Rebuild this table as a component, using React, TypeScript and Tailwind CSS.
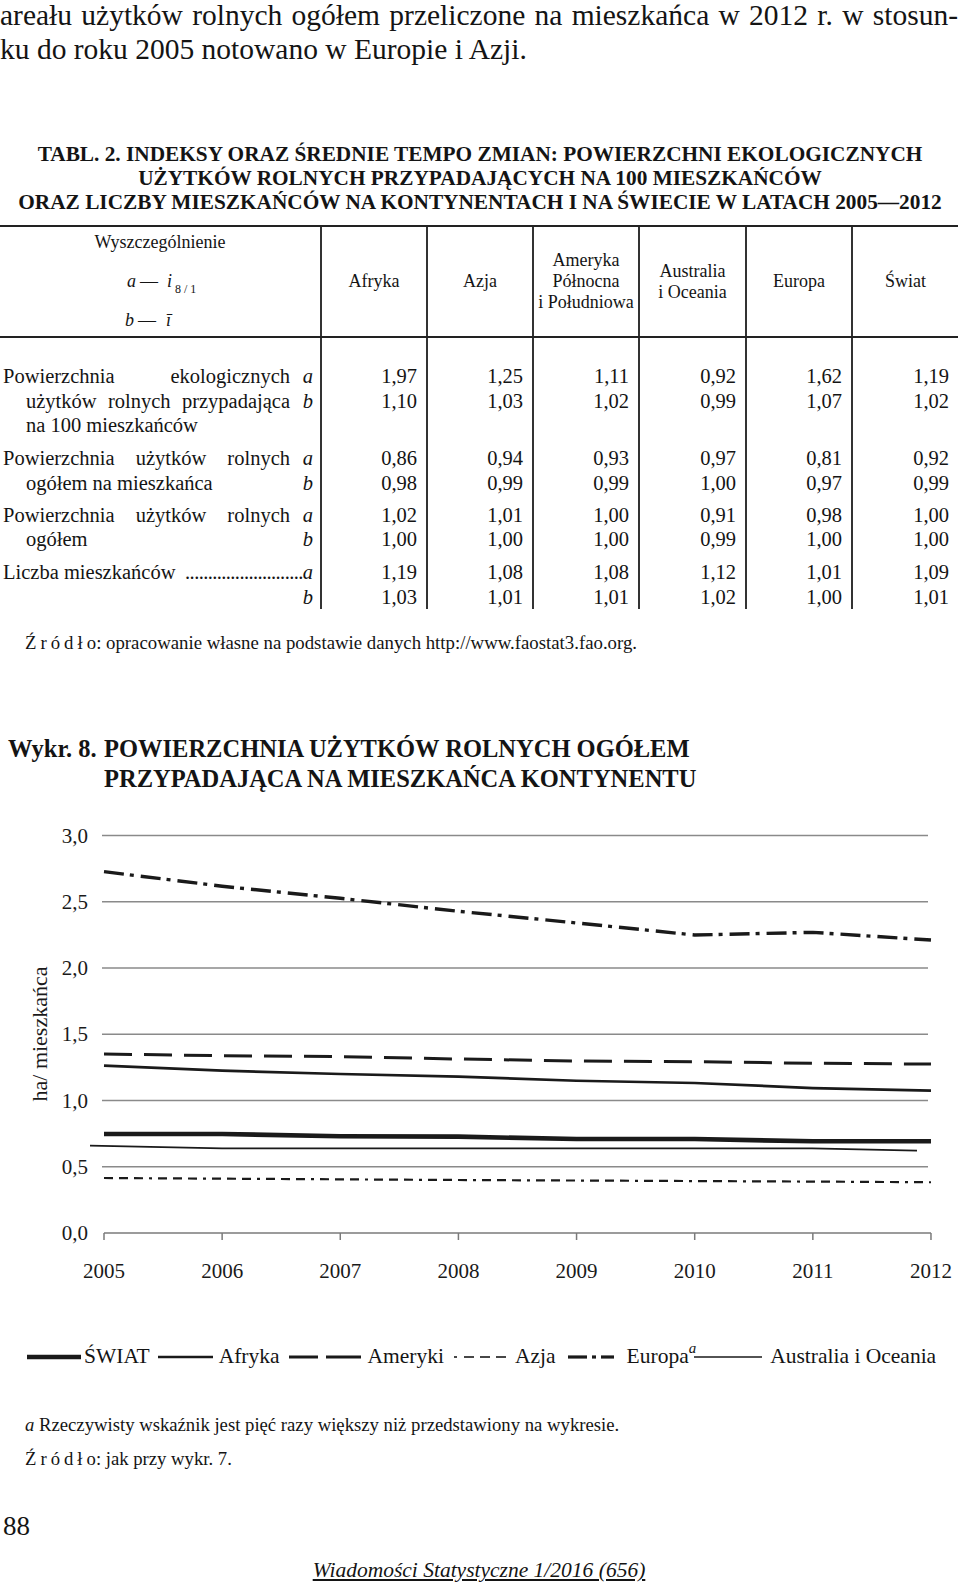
import React from 'react';

const HEAD = [
  ['Afryka'],
  ['Azja'],
  ['Ameryka', 'Północna', 'i Południowa'],
  ['Australia', 'i Oceania'],
  ['Europa'],
  ['Świat'],
];

type Line = { t: string; j?: boolean; ind?: boolean };

const GROUPS: { pad: string; label: Line[]; leader?: boolean; a: string[]; b: string[] }[] = [
  {
    pad: 'pt-[26px]',
    label: [
      { t: 'Powierzchnia ekologicznych', j: true },
      { t: 'użytków rolnych przypadająca', j: true, ind: true },
      { t: 'na 100 mieszkańców', ind: true },
    ],
    a: ['1,97', '1,25', '1,11', '0,92', '1,62', '1,19'],
    b: ['1,10', '1,03', '1,02', '0,99', '1,07', '1,02'],
  },
  {
    pad: 'pt-[8px]',
    label: [
      { t: 'Powierzchnia użytków rolnych', j: true },
      { t: 'ogółem na mieszkańca', ind: true },
    ],
    a: ['0,86', '0,94', '0,93', '0,97', '0,81', '0,92'],
    b: ['0,98', '0,99', '0,99', '1,00', '0,97', '0,99'],
  },
  {
    pad: 'pt-[7px]',
    label: [
      { t: 'Powierzchnia użytków rolnych', j: true },
      { t: 'ogółem', ind: true },
    ],
    a: ['1,02', '1,01', '1,00', '0,91', '0,98', '1,00'],
    b: ['1,00', '1,00', '1,00', '0,99', '1,00', '1,00'],
  },
  {
    pad: 'pt-[8px]',
    label: [{ t: 'Liczba mieszkańców' }],
    leader: true,
    a: ['1,19', '1,08', '1,08', '1,12', '1,01', '1,09'],
    b: ['1,03', '1,01', '1,01', '1,02', '1,00', '1,01'],
  },
];

// chart data, ha per inhabitant, 2005-2012
const YEARS = [2005, 2006, 2007, 2008, 2009, 2010, 2011, 2012];
const X0 = 104;
const STEP = 118.14;
const yOf = (v: number) => 1234 - v * 132.5;
const pts = (vals: number[]) => vals.map((v, i) => `${X0 + i * STEP},${yOf(v)}`).join(' ');

const EUROPA = [2.727, 2.617, 2.526, 2.428, 2.34, 2.249, 2.269, 2.211];
const AMERYKI = [1.351, 1.338, 1.331, 1.313, 1.298, 1.293, 1.281, 1.275];
const AFRYKA = [1.263, 1.225, 1.2, 1.18, 1.149, 1.132, 1.094, 1.074];
const SWIAT = [0.747, 0.747, 0.73, 0.727, 0.709, 0.709, 0.692, 0.692];
const AZJA = [0.415, 0.41, 0.405, 0.4, 0.396, 0.392, 0.388, 0.383];

function Chart() {
  return (
    <svg width={960} height={480} viewBox="0 810 960 480" className="block mt-[15px]">
      {[0.5, 1, 1.5, 2, 2.5, 3].map(v => (
        <line key={v} x1={102} x2={928} y1={yOf(v)} y2={yOf(v)} stroke="#8a8a8a" strokeWidth={1.3} />
      ))}
      <line x1={104} x2={931} y1={1234} y2={1234} stroke="#7a7a7a" strokeWidth={1.5} />
      {YEARS.map((y, i) => (
        <line key={y} x1={X0 + i * STEP} x2={X0 + i * STEP} y1={1234} y2={1241} stroke="#7a7a7a" strokeWidth={1.5} />
      ))}
      {[0, 0.5, 1, 1.5, 2, 2.5, 3].map(v => (
        <text key={v} x={88} y={yOf(v) + 7} fontSize={21} textAnchor="end" fill="#1a1a1a">
          {v.toFixed(1).replace('.', ',')}
        </text>
      ))}
      {YEARS.map((y, i) => (
        <text key={y} x={X0 + i * STEP} y={1279} fontSize={21} textAnchor="middle" fill="#1a1a1a">{y}</text>
      ))}
      <text x={47} y={1035} fontSize={22} textAnchor="middle" fill="#1a1a1a" transform="rotate(-90 47 1035)">
        ha/ mieszkańca
      </text>

      <g fill="none" stroke="#1a1a1a" strokeLinejoin="round">
        <polyline points={pts(EUROPA)} strokeWidth={3.4} strokeDasharray="20 6 4 7" />
        <polyline points={pts(AMERYKI)} strokeWidth={3} strokeDasharray="28 12" />
        <polyline points={pts(AFRYKA)} strokeWidth={2.7} />
        <polyline points={pts(SWIAT)} strokeWidth={4.6} />
        <polyline points="90,1146.7 222,1149.3 812,1149.3 917,1151.7" strokeWidth={1.7} />
        <polyline points={pts(AZJA)} strokeWidth={2.2} strokeDasharray="9 6 9 6 9 6 3 6" />
      </g>
    </svg>
  );
}

function Legend() {
  return (
    <div className="mt-[55px] flex items-center pl-[27px] h-[24px] text-[21.5px] leading-[24px]">
      <svg width={54} height={24}><line x1={0} x2={54} y1={13} y2={13} stroke="#1a1a1a" strokeWidth={4.5} /></svg>
      <span className="ml-[3px]">ŚWIAT</span>
      <svg width={55} height={24} className="ml-[8px]"><line x1={0} x2={55} y1={13} y2={13} stroke="#1a1a1a" strokeWidth={2.6} /></svg>
      <span className="ml-[6px]">Afryka</span>
      <svg width={72} height={24} className="ml-[9px]">
        <line x1={0} x2={29} y1={13} y2={13} stroke="#1a1a1a" strokeWidth={3} />
        <line x1={37} x2={72} y1={13} y2={13} stroke="#1a1a1a" strokeWidth={3} />
      </svg>
      <span className="ml-[7px]">Ameryki</span>
      <svg width={54} height={24} className="ml-[10px]">
        <line x1={0} x2={3} y1={13} y2={13} stroke="#1a1a1a" strokeWidth={1.6} />
        <line x1={10} x2={20} y1={13} y2={13} stroke="#1a1a1a" strokeWidth={1.6} />
        <line x1={26} x2={36} y1={13} y2={13} stroke="#1a1a1a" strokeWidth={1.6} />
        <line x1={42} x2={52} y1={13} y2={13} stroke="#1a1a1a" strokeWidth={1.6} />
      </svg>
      <span className="ml-[7px]">Azja</span>
      <svg width={46} height={24} className="ml-[12px]">
        <line x1={0} x2={19} y1={13} y2={13} stroke="#1a1a1a" strokeWidth={3.2} />
        <line x1={24} x2={28} y1={13} y2={13} stroke="#1a1a1a" strokeWidth={3.2} />
        <line x1={33} x2={46} y1={13} y2={13} stroke="#1a1a1a" strokeWidth={3.2} />
      </svg>
      <span className="ml-[13px]">Europa</span>
      <i className="text-[15px] relative -top-[8px]">a</i>
      <svg width={68} height={24} className="-ml-[2px]"><line x1={0} x2={68} y1={13} y2={13} stroke="#1a1a1a" strokeWidth={1.6} /></svg>
      <span className="ml-[8px]">Australia i Oceania</span>
    </div>
  );
}

export default function App() {
  return (
    <div className="w-[960px] h-[1586px] overflow-hidden bg-white text-[#141414] font-['Liberation_Serif',serif]">
      <div className="w-[958px] text-[29.5px]">
        <div className="leading-[30px] text-justify [text-align-last:justify]">
          areału użytków rolnych ogółem przeliczone na mieszkańca w 2012 r. w stosun-
        </div>
        <div className="leading-[38px]">ku do roku 2005 notowano w Europie i Azji.</div>
      </div>

      <h2 className="mt-[74px] w-[960px] text-center font-bold text-[21.3px] leading-[24px]">
        TABL. 2. INDEKSY ORAZ ŚREDNIE TEMPO ZMIAN: POWIERZCHNI EKOLOGICZNYCH
        <br />
        UŻYTKÓW ROLNYCH PRZYPADAJĄCYCH NA 100 MIESZKAŃCÓW
        <br />
        ORAZ LICZBY MIESZKAŃCÓW NA KONTYNENTACH I NA ŚWIECIE W LATACH 2005—2012
      </h2>

      {/* table */}
      <div className="mt-[11px] w-[958px]">
        <div className="grid grid-cols-[320px_106px_106px_106px_107px_106px_107px] h-[113px] border-t-2 border-b-2 border-[#222] text-[18px] leading-[21px]">
          <div className="flex flex-col pt-[5px]">
            <div className="text-center">Wyszczególnienie</div>
            <div className="mt-[18px] pl-[127px] whitespace-nowrap">
              <i>a</i>
              <span className="ml-[4px]">—</span>
              <i className="ml-[9px]">i</i>
              <span className="text-[12px] relative top-[6px] ml-[3px]">8 / 1</span>
            </div>
            <div className="mt-[16px] pl-[125px] whitespace-nowrap">
              <i>b</i>
              <span className="ml-[4px]">—</span>
              <i className="ml-[10px]">ī</i>
            </div>
          </div>
          {HEAD.map(h => (
            <div key={h[0]} className="border-l-2 border-[#333] flex flex-col items-center justify-center text-center">
              {h.map(l => (
                <span key={l} className="whitespace-nowrap">{l}</span>
              ))}
            </div>
          ))}
        </div>

        <div className="grid grid-cols-[320px_106px_106px_106px_107px_106px_107px] text-[20.5px] leading-[24.7px]">
          {GROUPS.map((g, gi) => (
            <React.Fragment key={gi}>
              <div className={`${g.pad} pl-[3px] pr-[7px]`}>
                {g.leader ? (
                  <>
                    <div className="flex">
                      <span className="whitespace-nowrap">{g.label[0].t}</span>
                      <span className="flex-1 text-right whitespace-nowrap tracking-[-0.6px]">
                        {'.'.repeat(26)}
                      </span>
                      <i>a</i>
                    </div>
                    <div className="text-right"><i>b</i></div>
                  </>
                ) : (
                  <div className="flex">
                    <div className="w-[287px]">
                      {g.label.map(l => (
                        <div
                          key={l.t}
                          className={`${l.ind ? 'pl-[23px]' : ''} ${l.j ? 'text-justify [text-align-last:justify]' : ''} whitespace-nowrap`}
                        >
                          {l.t}
                        </div>
                      ))}
                    </div>
                    <div className="flex-1 text-right">
                      <div><i>a</i></div>
                      <div><i>b</i></div>
                    </div>
                  </div>
                )}
              </div>
              {g.a.map((v, i) => (
                <div key={i} className={`${g.pad} border-l-2 border-[#333] text-right pr-[9px]`}>
                  <div>{v}</div>
                  <div>{g.b[i]}</div>
                </div>
              ))}
            </React.Fragment>
          ))}
        </div>
      </div>

      <p className="mt-[23px] pl-[25px] text-[18.8px] leading-[22px]">
        <span className="tracking-[4px]">Źródł</span>o: opracowanie własne na podstawie danych http://www.faostat3.fao.org.
      </p>

      <h3 className="mt-[80px] flex font-bold text-[24.5px] leading-[30px] pl-[8px]">
        <span className="w-[96px]">Wykr. 8.</span>
        <span>
          POWIERZCHNIA UŻYTKÓW ROLNYCH OGÓŁEM
          <br />
          PRZYPADAJĄCA NA MIESZKAŃCA KONTYNENTU
        </span>
      </h3>

      <Chart />
      <Legend />

      <p className="mt-[46px] pl-[25px] text-[18.7px] leading-[22px]">
        <i>a</i> Rzeczywisty wskaźnik jest pięć razy większy niż przedstawiony na wykresie.
      </p>
      <p className="mt-[12px] pl-[25px] text-[18.7px] leading-[22px]">
        <span className="tracking-[4px]">Źródł</span>o: jak przy wykr. 7.
      </p>

      <div className="mt-[41px] pl-[3px] text-[27px] leading-[30px]">88</div>
      <div className="mt-[17px] text-center pr-[2px] text-[21.5px] leading-[24px] italic underline">
        Wiadomości Statystyczne 1/2016 (656)
      </div>
    </div>
  );
}
